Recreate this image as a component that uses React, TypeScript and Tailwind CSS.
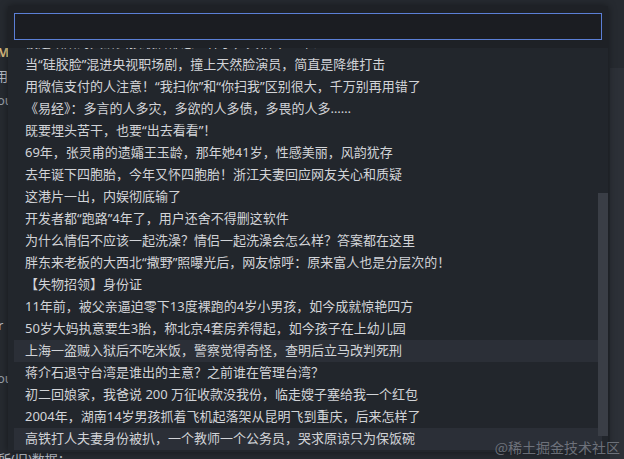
const titles = [
  "被逼结婚的大龄女孩最后都怎么样了，真相令人唏嘘",
  "当“硅胶脸”混进央视职场剧，撞上天然脸演员，简直是降维打击",
  "用微信支付的人注意！“我扫你”和“你扫我”区别很大，千万别再用错了",
  "《易经》：多言的人多灾，多欲的人多债，多畏的人多……",
  "既要埋头苦干，也要“出去看看”！",
  "69年，张灵甫的遗孀王玉龄，那年她41岁，性感美丽，风韵犹存",
  "去年诞下四胞胎，今年又怀四胞胎！浙江夫妻回应网友关心和质疑",
  "这港片一出，内娱彻底输了",
  "开发者都“跑路”4年了，用户还舍不得删这软件",
  "为什么情侣不应该一起洗澡？情侣一起洗澡会怎么样？答案都在这里",
  "胖东来老板的大西北“撒野”照曝光后，网友惊呼：原来富人也是分层次的！",
  "【失物招领】身份证",
  "11年前，被父亲逼迫零下13度裸跑的4岁小男孩，如今成就惊艳四方",
  "50岁大妈执意要生3胎，称北京4套房养得起，如今孩子在上幼儿园",
  "上海一盗贼入狱后不吃米饭，警察觉得奇怪，查明后立马改判死刑",
  "蒋介石退守台湾是谁出的主意？之前谁在管理台湾？",
  "初二回娘家，我爸说 200 万征收款没我份，临走嫂子塞给我一个红包",
  "2004年，湖南14岁男孩抓着飞机起落架从昆明飞到重庆，后来怎样了",
  "高铁打人夫妻身份被扒，一个教师一个公务员，哭求原谅只为保饭碗",
];

const highlighted = [14, 18];

const font = "font-['Segoe_UI','Noto_Sans','Noto_Sans_CJK_SC',sans-serif]";

function EditorBehind() {
  return (
    <div className="flex flex-col pt-[40px] text-[13px] leading-[24px] text-[#b9bec7]">
      <div className="h-[24px] -ml-[3px] font-bold text-[#d7ba7d]">M</div>
      <div className="h-[24px] -ml-[5px]">用</div>
      <div className="h-[24px] -ml-[3px] text-[#9aa0a8]">ou</div>
      <div className="h-[201px]" />
      <div className="h-[24px] -ml-[2px]">r</div>
      <div className="h-[29px]" />
      <div className="h-[24px] -ml-[3px] text-[#9aa0a8]">ou</div>
      <div className="h-[57px]" />
      <div className="h-[24px] -ml-[2px]">所(旧)数据：</div>
    </div>
  );
}

function QuickPick() {
  return (
    <div className="absolute left-[8px] top-[6px] flex h-[446px] w-[600px] flex-col bg-[#22262c] shadow-[0_0_8px_rgba(0,0,0,0.45)]">
      {/* header with input */}
      <div className="bg-[#1e2126] px-[6px] pt-[7px] pb-[8px]">
        <div className="h-[27px] w-full border border-[#5b7fd6] bg-[#1b1d22]" />
      </div>

      {/* list */}
      <div className="relative flex-1 overflow-hidden px-[6px]">
        <div className="-mt-[16px] flex flex-col">
          {titles.map((t, i) => (
            <div
              key={i}
              className={`flex h-[22px] shrink-0 items-center whitespace-nowrap pl-[11px] text-[13px] text-[#d2d4d8] ${
                highlighted.includes(i) ? "bg-[#2b2f37]" : ""
              }`}
            >
              {t}
            </div>
          ))}
        </div>

        {/* scrollbar */}
        <div className="absolute right-0 top-[145px] h-[243px] w-[10px] bg-[#3a3e46]" />
      </div>
    </div>
  );
}

export default function App() {
  return (
    <div className={`relative h-[459px] w-[624px] overflow-hidden bg-[#262a30] ${font}`}>
      <EditorBehind />

      {/* editor scrollbar */}
      <div className="absolute right-0 top-[68px] h-[391px] w-[14px] bg-[#2c3037]" />

      <QuickPick />

      <div className="pointer-events-none absolute bottom-[5px] right-[4px] text-[14px] leading-none text-[#8b9099]/70 font-['Noto_Sans_CJK_SC',serif]">
        @稀土掘金技术社区
      </div>
    </div>
  );
}
